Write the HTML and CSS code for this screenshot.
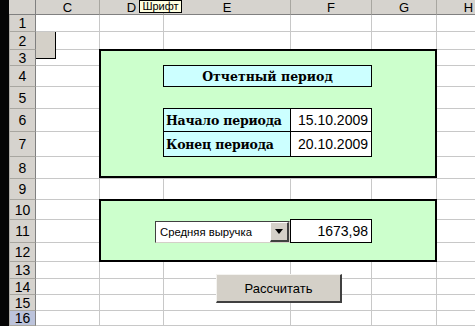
FILE: index.html
```html
<!DOCTYPE html>
<html lang="ru">

<head>
  <meta charset="UTF-8">
  <meta name="viewport" content="width=device-width, initial-scale=1.0">
  <title>Отчетный период</title>
  <link rel="stylesheet" href="styles.css">
</head>

<body>
  <div class="window">
    <div class="frame-edge"></div>

    <div class="sheet">
      <!-- сетка листа: заголовки и пустые ячейки -->
      <div class="grid">
        <div class="corner"></div>
        <div class="col-head">C</div>
        <div class="col-head">D</div>
        <div class="col-head">E</div>
        <div class="col-head">F</div>
        <div class="col-head">G</div>
        <div class="col-head">H</div>

        <div class="row-head">1</div>
        <div class="cell"></div><div class="cell"></div><div class="cell"></div><div class="cell"></div><div class="cell"></div><div class="cell"></div>
        <div class="row-head">2</div>
        <div class="cell"></div><div class="cell"></div><div class="cell"></div><div class="cell"></div><div class="cell"></div><div class="cell"></div>
        <div class="row-head">3</div>
        <div class="cell"></div><div class="cell"></div><div class="cell"></div><div class="cell"></div><div class="cell"></div><div class="cell"></div>
        <div class="row-head">4</div>
        <div class="cell"></div><div class="cell"></div><div class="cell"></div><div class="cell"></div><div class="cell"></div><div class="cell"></div>
        <div class="row-head">5</div>
        <div class="cell"></div><div class="cell"></div><div class="cell"></div><div class="cell"></div><div class="cell"></div><div class="cell"></div>
        <div class="row-head">6</div>
        <div class="cell"></div><div class="cell"></div><div class="cell"></div><div class="cell"></div><div class="cell"></div><div class="cell"></div>
        <div class="row-head">7</div>
        <div class="cell"></div><div class="cell"></div><div class="cell"></div><div class="cell"></div><div class="cell"></div><div class="cell"></div>
        <div class="row-head">8</div>
        <div class="cell"></div><div class="cell"></div><div class="cell"></div><div class="cell"></div><div class="cell"></div><div class="cell"></div>
        <div class="row-head">9</div>
        <div class="cell"></div><div class="cell"></div><div class="cell"></div><div class="cell"></div><div class="cell"></div><div class="cell"></div>
        <div class="row-head">10</div>
        <div class="cell"></div><div class="cell"></div><div class="cell"></div><div class="cell"></div><div class="cell"></div><div class="cell"></div>
        <div class="row-head">11</div>
        <div class="cell"></div><div class="cell"></div><div class="cell"></div><div class="cell"></div><div class="cell"></div><div class="cell"></div>
        <div class="row-head">12</div>
        <div class="cell"></div><div class="cell"></div><div class="cell"></div><div class="cell"></div><div class="cell"></div><div class="cell"></div>
        <div class="row-head">13</div>
        <div class="cell"></div><div class="cell"></div><div class="cell"></div><div class="cell"></div><div class="cell"></div><div class="cell"></div>
        <div class="row-head">14</div>
        <div class="cell"></div><div class="cell"></div><div class="cell"></div><div class="cell"></div><div class="cell"></div><div class="cell"></div>
        <div class="row-head">15</div>
        <div class="cell"></div><div class="cell"></div><div class="cell"></div><div class="cell"></div><div class="cell"></div><div class="cell"></div>
        <div class="row-head is-selected">16</div>
        <div class="cell"></div><div class="cell"></div><div class="cell"></div><div class="cell"></div><div class="cell"></div><div class="cell"></div>
      </div>

      <!-- оформленные ячейки и элементы управления поверх сетки -->
      <div class="layer">
        <div class="stub"></div>

        <div class="panel panel-period"></div>
        <div class="title-cell">Отчетный период</div>
        <div class="box label-cell start-row">Начало периода</div>
        <div class="box value-cell start-row">15.10.2009</div>
        <div class="box label-cell end-row">Конец периода</div>
        <div class="box value-cell end-row">20.10.2009</div>

        <div class="panel panel-result"></div>
        <div class="combo">
          <span class="combo-text">Средняя выручка</span>
          <span class="combo-arrow"><span class="arrow-down"></span></span>
        </div>
        <div class="box value-cell result-row">1673,98</div>

        <button class="calc">Рассчитать</button>
      </div>

      <div class="tooltip">Шрифт</div>
    </div>
  </div>
</body>

</html>
```

FILE: styles.css
```css
body {
  margin: 0;
  font-family: "Liberation Sans", Arial, sans-serif;
  background-color: #fff;
  overflow: hidden;
}

.window {
  display: flex;
  width: 475px;
  height: 326px;
  overflow: hidden;
}

.frame-edge {
  flex: 0 0 9px;
  background-color: #050505;
}

.sheet {
  --cols: 27px 64px 64px 127px 81px 65px 64px;
  --rows: 15px 17px 18px 16px 21px 22px 23px 25px 22px 21px 20px 23px 19px 17px 16px 16px 15px;
  position: relative;
  display: grid;
  grid-template-columns: var(--cols);
  grid-template-rows: var(--rows);
  flex: none;
}

.grid,
.layer {
  grid-area: 1 / 1;
  display: grid;
  grid-template-columns: var(--cols);
  grid-template-rows: var(--rows);
}

/* заголовки */
.corner,
.col-head,
.row-head {
  box-sizing: border-box;
  background-color: #d6d3ce;
  font-size: 13px;
  color: #000;
  display: flex;
  align-items: center;
  justify-content: center;
}

.corner {
  border-right: 1px solid #808080;
  border-bottom: 1px solid #808080;
}

.col-head {
  border-right: 1px solid #a8a6a0;
  border-bottom: 1px solid #808080;
  padding-top: 1px;
}

.row-head {
  border-right: 1px solid #808080;
  border-bottom: 1px solid #a8a6a0;
  border-left: 1px solid #b0aea8;
  font-size: 14px;
}

.row-head.is-selected {
  background-color: #bcc3db;
}

.cell {
  box-sizing: border-box;
  border-right: 1px solid #c8c8c8;
  border-bottom: 1px solid #c8c8c8;
}

/* зеленые блоки */
.panel {
  box-sizing: border-box;
  grid-column: 3 / 7;
  margin: -1px 0 0 -1px;
  border: 2px solid #000;
  background-color: #ccffcc;
}

.panel-period {
  grid-row: 4 / 10;
  margin-bottom: 1px;
}

.panel-result {
  grid-row: 11 / 14;
}

.title-cell,
.box {
  box-sizing: border-box;
  margin: -1px 0 0 -1px;
  border: 1px solid #000;
  display: flex;
  align-items: center;
  white-space: nowrap;
}

.title-cell {
  grid-column: 4 / 6;
  grid-row: 5;
  justify-content: center;
  background-color: #ccffff;
  font-family: "DejaVu Serif", "Liberation Serif", serif;
  font-weight: bold;
  font-size: 12.5px;
}

.label-cell {
  grid-column: 4;
  padding-left: 2px;
  background-color: #ccffff;
  font-family: "DejaVu Serif", "Liberation Serif", serif;
  font-weight: bold;
  font-size: 12.5px;
  letter-spacing: -0.2px;
}

.value-cell {
  grid-column: 5;
  justify-content: flex-end;
  padding-right: 3px;
  background-color: #fff;
  font-size: 14px;
}

.start-row {
  grid-row: 7;
}

.end-row {
  grid-row: 8;
}

.result-row {
  grid-row: 12;
}

/* элементы управления */
.stub {
  grid-column: 2;
  grid-row: 3 / 5;
  align-self: start;
  justify-self: start;
  box-sizing: border-box;
  width: 20px;
  height: 27px;
  background-color: #d4d0c8;
  border-right: 1px solid #000;
  border-bottom: 1px solid #000;
}

.combo {
  grid-column: 3 / 5;
  grid-row: 12;
  justify-self: end;
  align-self: start;
  box-sizing: border-box;
  width: 135px;
  height: 22px;
  margin: 1px 1px 0 0;
  display: flex;
  background-color: #fff;
  border: 1px solid #404040;
  border-right-color: #d4d0c8;
  border-bottom-color: #d4d0c8;
}

.combo-text {
  flex: 1;
  display: flex;
  align-items: center;
  padding-left: 4px;
  font-size: 11.3px;
}

.combo-arrow {
  box-sizing: border-box;
  width: 19px;
  display: flex;
  align-items: center;
  justify-content: center;
  background-color: #d4d0c8;
  border-top: 1px solid #fff;
  border-left: 1px solid #fff;
  border-right: 2px solid #404040;
  border-bottom: 2px solid #404040;
}

.arrow-down {
  width: 0;
  height: 0;
  border-left: 4px solid transparent;
  border-right: 4px solid transparent;
  border-top: 5px solid #000;
}

.calc {
  grid-column: 4 / 6;
  grid-row: 14 / 17;
  justify-self: start;
  align-self: start;
  box-sizing: border-box;
  width: 126px;
  height: 29px;
  margin: 12px 0 0 52px;
  padding: 0;
  font-family: "Liberation Sans", Arial, sans-serif;
  font-size: 13px;
  color: #000;
  background-color: #d4d0c8;
  border: 0;
  border-top: 1px solid #f4f3f0;
  border-left: 1px solid #f4f3f0;
  border-right: 2px solid #404040;
  border-bottom: 2px solid #404040;
}

.tooltip {
  position: absolute;
  left: 130px;
  top: 0;
  box-sizing: border-box;
  width: 43px;
  height: 13px;
  line-height: 11px;
  text-align: center;
  font-size: 11px;
  background-color: #ffffe1;
  border: 1px solid #000;
}
```
